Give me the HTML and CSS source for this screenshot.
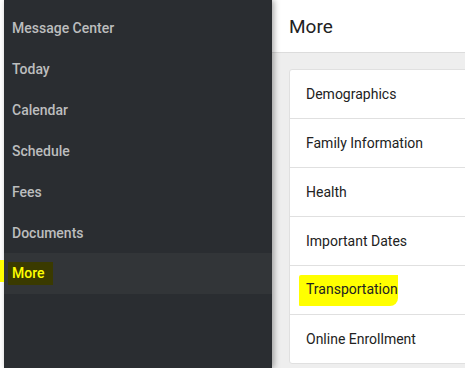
FILE: index.html
```html
<!DOCTYPE html>
<html lang="en">
<head>
    <meta charset="UTF-8">
    <meta name="viewport" content="width=device-width, initial-scale=1.0">
    <title>More</title>
    <link rel="stylesheet" href="styles.css">
</head>
<body>

    <nav class="sidebar">
        <a class="nav-item" href="#">Message Center</a>
        <a class="nav-item" href="#">Today</a>
        <a class="nav-item" href="#">Calendar</a>
        <a class="nav-item" href="#">Schedule</a>
        <a class="nav-item" href="#">Fees</a>
        <a class="nav-item" href="#">Documents</a>
        <a class="nav-item active" href="#"><span class="marker-dark">More</span></a>
    </nav>

    <div class="main">
        <header class="page-header">
            <h1>More</h1>
        </header>

        <ul class="card">
            <li>Demographics</li>
            <li>Family Information</li>
            <li>Health</li>
            <li>Important Dates</li>
            <li><span class="marker">Transportation</span></li>
            <li>Online Enrollment</li>
        </ul>
    </div>

</body>
</html>
```

FILE: styles.css
```css
body {
    font-family: Roboto, "Liberation Sans", sans-serif;
    margin: 0;
    padding: 0 0 0 4px;
    background-color: white;
    display: flex;
    height: 368px;
    overflow: hidden;
}
.sidebar {
    position: relative;
    z-index: 1;
    width: 268px;
    flex-shrink: 0;
    background-color: #2a2d31;
    padding-top: 7px;
    display: flex;
    flex-direction: column;
    box-shadow: 2px 0 6px rgba(0, 0, 0, 0.35);
}
.nav-item {
    display: flex;
    align-items: center;
    height: 41px;
    padding-left: 8px;
    color: #bcbdbe;
    font-size: 14px;
    font-weight: 500;
    text-decoration: none;
}
.nav-item.active {
    background-color: #323538;
    color: #ffff00;
    position: relative;
}
.nav-item.active::before {
    content: "";
    position: absolute;
    left: -4px;
    top: 7px;
    width: 4px;
    height: 22px;
    background-color: #ffff00;
}
.marker-dark {
    background-color: #3a3a00;
    padding: 3px 8px 4px 4px;
    margin-left: -4px;
}
.main {
    flex: 1;
    background-color: #eeeeee;
    overflow: hidden;
}
.page-header {
    background-color: white;
    height: 52px;
    border-bottom: 1px solid #dcdcdc;
    display: flex;
    align-items: center;
    padding-left: 17px;
}
h1 {
    margin: 0;
    font-size: 19px;
    font-weight: 400;
    color: #222;
}
.card {
    list-style: none;
    margin: 16px -10px 0 17px;
    padding: 0;
    background-color: white;
    border: 1px solid #e0e0e0;
    border-radius: 3px;
}
.card li {
    height: 48px;
    display: flex;
    align-items: center;
    padding-left: 16px;
    font-size: 14px;
    color: #222;
    border-bottom: 1px solid #e0e0e0;
}
.card li:last-child {
    border-bottom: none;
}
.marker {
    background-color: #ffff00;
    padding: 6px 0 9px 7px;
    margin-left: -7px;
    border-radius: 2px 0 8px 1px;
}
```
